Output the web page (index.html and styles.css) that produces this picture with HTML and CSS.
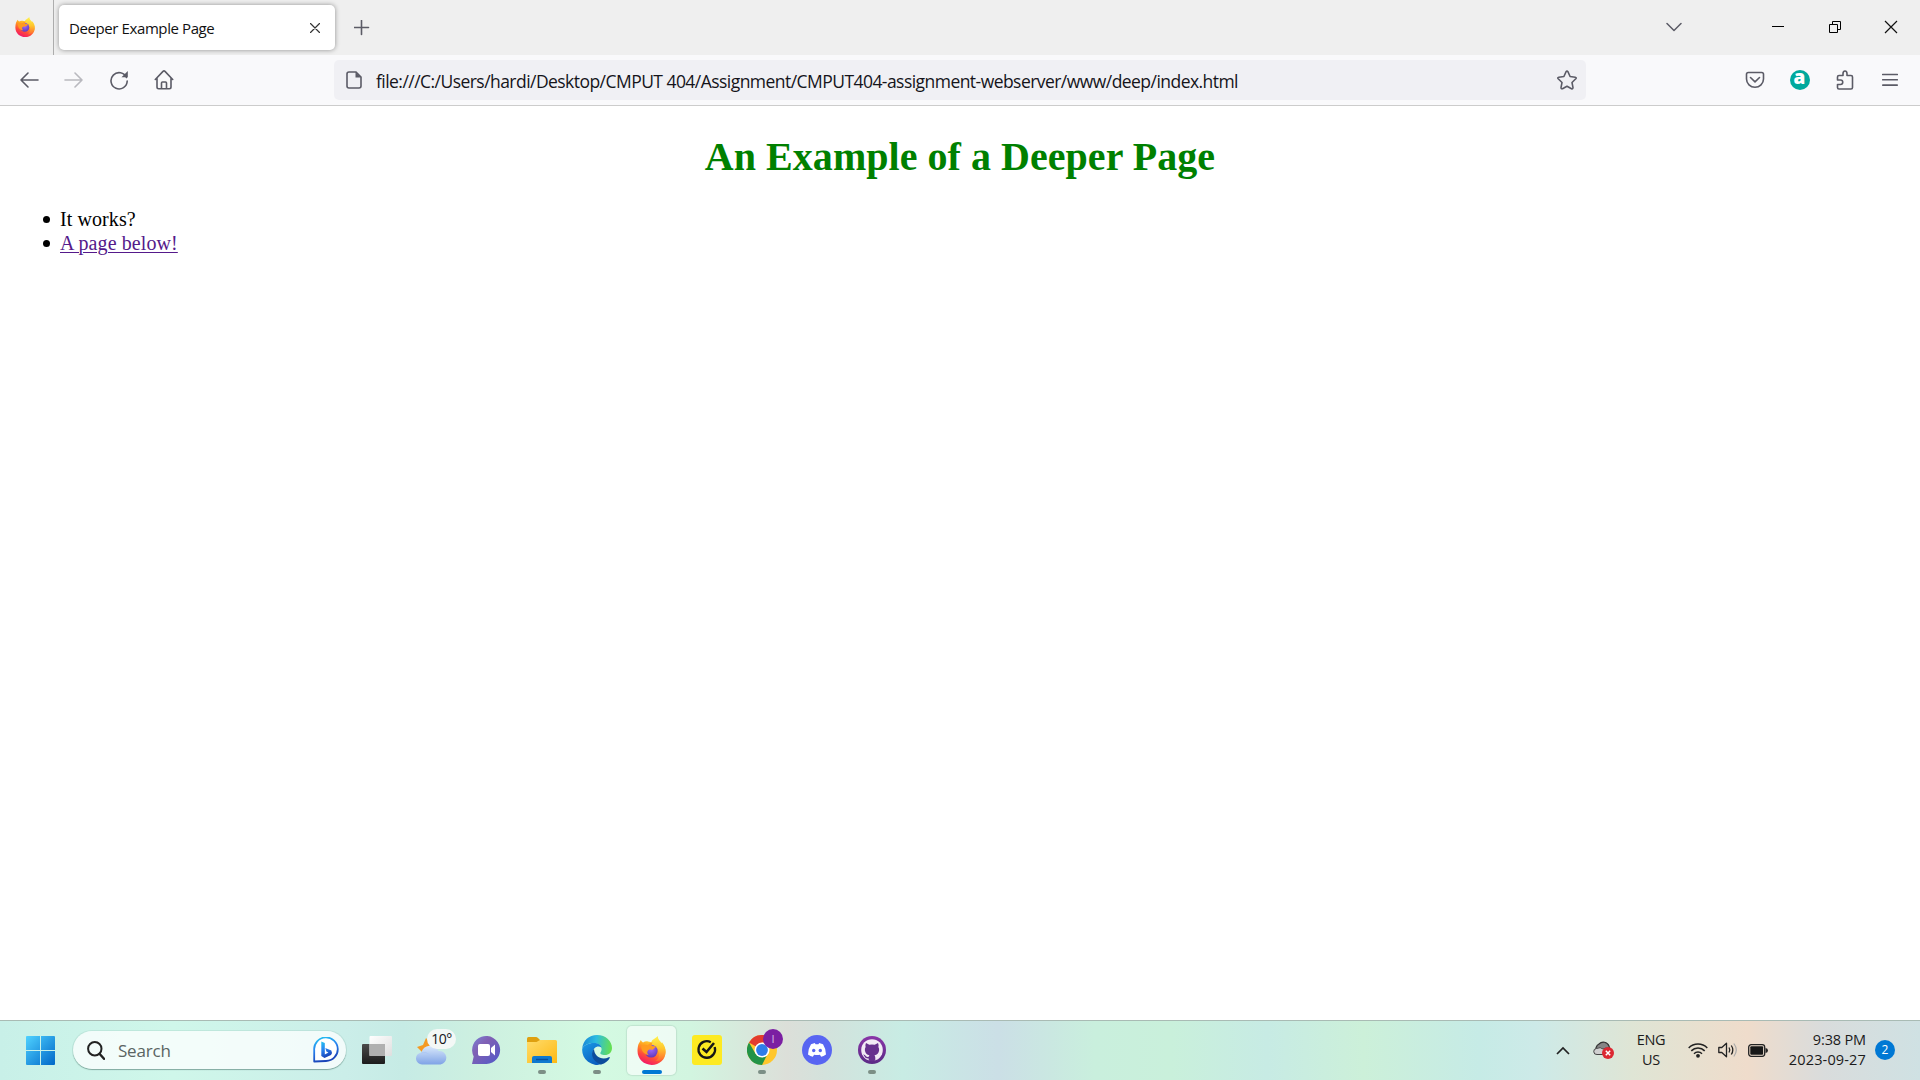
FILE: index.html
```html
<!DOCTYPE html>
<html lang="en">
<head>
<meta charset="utf-8">
<title>Deeper Example Page</title>
<link rel="stylesheet" href="styles.css">
</head>
<body>
<svg class="defs" width="0" height="0" aria-hidden="true">
  <defs>
    <linearGradient id="ff-body" x1=".8" y1="0" x2=".3" y2="1"><stop offset="0" stop-color="#fff13f"/><stop offset=".4" stop-color="#ffa020"/><stop offset=".7" stop-color="#ff4a3c"/><stop offset="1" stop-color="#f1126c"/></linearGradient>
    <linearGradient id="ff-tail" x1=".5" y1="0" x2=".5" y2="1"><stop offset="0" stop-color="#fff44f"/><stop offset=".5" stop-color="#ffc62c"/><stop offset="1" stop-color="#ff6a30"/></linearGradient>
    <radialGradient id="ff-core" cx=".5" cy=".35" r=".7"><stop offset="0" stop-color="#a06bff"/><stop offset="1" stop-color="#5b35b5"/></radialGradient>
    <linearGradient id="win" x1="0" y1="0" x2="1" y2="1"><stop offset="0" stop-color="#4fd2ff"/><stop offset="1" stop-color="#0067c8"/></linearGradient>
    <linearGradient id="bing" x1="0" y1="0" x2=".3" y2="1"><stop offset="0" stop-color="#23c6f0"/><stop offset=".5" stop-color="#2883f0"/><stop offset="1" stop-color="#1a44b8"/></linearGradient>
    <linearGradient id="dark" x1="0" y1="0" x2="0" y2="1"><stop offset="0" stop-color="#4a4a4a"/><stop offset="1" stop-color="#1c1c1c"/></linearGradient>
    <linearGradient id="light" x1="0" y1="0" x2="1" y2="1"><stop offset="0" stop-color="#fff"/><stop offset="1" stop-color="#dedede"/></linearGradient>
    <linearGradient id="cloud" x1="0" y1="0" x2="0" y2="1"><stop offset="0" stop-color="#dcebfc"/><stop offset="1" stop-color="#7fa3e6"/></linearGradient>
    <linearGradient id="chat" x1="0" y1="0" x2="1" y2="1"><stop offset="0" stop-color="#7a83d8"/><stop offset=".35" stop-color="#8060b4"/><stop offset="1" stop-color="#5059c9"/></linearGradient>
    <linearGradient id="folder" x1="0" y1="0" x2="1" y2="1"><stop offset="0" stop-color="#ffdc6c"/><stop offset="1" stop-color="#fdb913"/></linearGradient>
    <linearGradient id="edge-top" x1="0" y1=".4" x2="1" y2=".5"><stop offset="0" stop-color="#1787d8"/><stop offset=".45" stop-color="#2dbce0"/><stop offset="1" stop-color="#66e04e"/></linearGradient>
    <linearGradient id="edge-left" x1="0" y1="0" x2=".6" y2="1"><stop offset="0" stop-color="#1a9ae6"/><stop offset="1" stop-color="#0a5fbf"/></linearGradient>
    <linearGradient id="git" x1="0" y1="0" x2="0" y2="1"><stop offset="0" stop-color="#8a35a8"/><stop offset="1" stop-color="#5b2a86"/></linearGradient>
    <symbol id="firefox" viewBox="0 0 28 28">
      <path fill="url(#ff-body)" d="M1.400 8C2 6.300 3 5.600 3.600 3.800c.6 1.200 1.300 2 2.200 2.400C7.300 5.300 8.900 5 10.500 5.200L14 6l4-1c4.500 1 9.600 4 9.600 10.300C27.600 23 21.600 28 14.200 28S.5 22.500.5 14.600C.5 12 .8 10 1.400 8z"/>
      <path fill="url(#ff-tail)" d="M20 0c.2 3.300 2 4.800 4 6.900.1-.5.100-.8 0-1.200 2.600 3 3.900 6.200 3.500 10.200C27 22 22 24.600 18 24c4.300-2.600 4.400-9 1-12-2.600-2.200-5-3.400-5-6C14 3.500 17.700 2.600 20 0z"/>
      <circle cx="13.700" cy="14.600" r="6.200" fill="url(#ff-core)"/>
      <path fill="#ff9a1f" d="M4 10c2.400-2.500 5-1.500 6.400-1 1.500-2 3-2.700 4.600-2.800-.8 1.100-1.100 2.200-.8 3.100 1 .5 3 .4 4 .8-.3 1.700-2.200 2-3.200 3.300-2-.5-3.800-.4-4.700 1.100-.8 1.400-.2 3 1.200 4-4.500-.3-7.500-4-7.500-8.500z"/>
    </symbol>
  </defs>
</svg>

<header class="titlebar">
  <div class="titlebar-brand"><svg width="20" height="20"><use href="#firefox"/></svg></div>
  <div class="tab">
    <span class="tab-title">Deeper Example Page</span>
    <svg class="stroke" width="10" height="10" viewBox="0 0 10 10"><path d="M.5.500l9 9M9.500.5l-9 9" stroke="#333" stroke-width="1.200"/></svg>
  </div>
  <svg class="stroke new-tab" width="16" height="16" viewBox="0 0 16 16"><path d="M7.500.5v14M.5 7.500h14"/></svg>
  <div class="window-controls">
    <svg class="stroke" width="16" height="10" viewBox="0 0 16 10"><path d="M1 1.500l7 7 7-7" stroke-width="1.500"/></svg>
    <svg class="minimize" width="12" height="12" viewBox="0 0 12 12"><path d="M0 5.500h12" stroke="#000"/></svg>
    <svg width="12" height="12" viewBox="0 0 12 12"><path d="M.5 3.500h8v8h-8zM3.500 3.500v-3h8v8h-3" fill="none" stroke="#000"/></svg>
    <svg width="14" height="14" viewBox="0 0 14 14"><path d="M1 1l12 12M13 1L1 13" stroke="#111" stroke-width="1.200"/></svg>
  </div>
</header>

<nav class="toolbar">
  <div class="tool"><svg class="stroke" width="20" height="20" viewBox="0 0 20 20"><path d="M19 10H2M9 3L2 10l7 7"/></svg></div>
  <div class="tool disabled"><svg class="stroke" width="20" height="20" viewBox="0 0 20 20"><path d="M1 10h17M11 3l7 7-7 7"/></svg></div>
  <div class="tool"><svg class="stroke" width="20" height="20" viewBox="0 0 20 20"><path d="M17.500 7.500A8.100 8.100 0 1 0 18.200 11"/><path d="M18.800 1v6.300h-6.300z" fill="#5b5b66" stroke="none"/></svg></div>
  <div class="tool"><svg class="stroke" width="20" height="20" viewBox="0 0 20 20"><path d="M1.300 9.500L9 1.400q1-.9 2 0l7.700 8.100M3 8v9q0 1.700 1.700 1.700h10.600q1.700 0 1.700-1.700V8M7.500 18.500V13q0-1 1-1h3q1 0 1 1v5.500"/></svg></div>
  <div class="address">
    <svg width="16" height="18" viewBox="0 0 16 18"><path d="M3 1h7l5 5v9q0 2-2 2H3q-2 0-2-2V3q0-2 2-2z" fill="none" stroke="#5b5b66" stroke-width="1.600"/><path d="M9.500 1v5.500H15z" fill="#5b5b66"/></svg>
    <span class="address-text">file:///C:/Users/hardi/Desktop/CMPUT 404/Assignment/CMPUT404-assignment-webserver/www/deep/index.html</span>
    <svg class="stroke" width="20" height="20" viewBox="0 0 20 20"><path d="M9.100 1.700q.9-1.500 1.800 0l2.200 4.800 5.100.7q1.600.4.600 1.600L15 12.500l1 5.100q0 1.700-1.500 1.100L10 16.200l-4.500 2.500Q4 19.200 4 17.600l1-5.100L1.200 8.800q-1-1.200.6-1.600l5.100-.7z"/></svg>
  </div>
  <div class="extensions">
    <div class="tool"><svg class="stroke" width="20" height="20" viewBox="0 0 20 20"><path d="M3.300 2.500h13.400q1.800 0 1.800 1.800V9a8.500 8.300 0 0 1-17 0V4.300q0-1.800 1.800-1.800zM5.500 7.500L10 11.800l4.500-4.300"/></svg></div>
    <div class="tool"><span class="ext-badge">a</span></div>
    <div class="tool"><svg class="stroke" width="20" height="20" viewBox="0 0 20 20"><path d="M2.500 10V7q0-1.500 1.500-1.500h4V3.700a2 2.700 0 0 1 4 0v1.800h4q1.500 0 1.500 1.500v10.500q0 1.500-1.500 1.500H4q-1.500 0-1.500-1.500v-3h3a2.200 2.200 0 0 0 0-4.500z"/></svg></div>
    <div class="tool"><svg class="stroke" width="16" height="14" viewBox="0 0 16 14"><path d="M.7 1.500h14.600M.7 6.800h14.600M.7 12.100h14.600"/></svg></div>
  </div>
</nav>

<main class="page">
  <h1>An Example of a Deeper Page</h1>
  <ul>
    <li>It works?</li>
    <li><a class="below" href="#">A page below!</a></li>
  </ul>
</main>

<footer class="taskbar">
  <svg class="start" width="29" height="29" viewBox="0 0 29 29"><path fill="url(#win)" d="M1 0h13v14H0V1q0-1 1-1zM15 0h13q1 0 1 1v13H15zM0 15h14v14H1q-1 0-1-1zM15 15h14v13q0 1-1 1H15z"/></svg>
  <div class="search">
    <svg width="18" height="19" viewBox="0 0 18 19"><circle cx="7.800" cy="7.800" r="6.700" fill="none" stroke="#222" stroke-width="2"/><path d="M12.500 12.800l4.500 5" stroke="#222" stroke-width="2.400" stroke-linecap="round"/></svg>
    <span class="search-label">Search</span>
    <svg width="26" height="26" viewBox="0 0 26 26"><path d="M1.200 24.500V13A11.800 11.800 0 1 1 13 24z" fill="#fff" stroke="url(#bing)" stroke-width="1.800" stroke-linejoin="round"/><path d="M8.300 4.500l3.500 1.400v11.500l3.600-2-2-1-1.100-3.400 6 2.500q1.500 2.500-.3 4.400L11.500 21l-3.200-2z" fill="url(#bing)"/></svg>
  </div>
  <div class="apps">
    <div class="app"><svg width="30" height="28" viewBox="0 0 30 28"><rect y="8" width="23" height="20" rx="1" fill="url(#dark)"/><rect x="7.500" width="22.500" height="20" rx="1" fill="url(#light)"/><path d="M7.500 8H23v12H7.500z" fill="#b0b0b0"/></svg></div>
    <div class="app"><svg width="31" height="30" viewBox="0 0 31 30"><path d="M1 12l6-2 3-7 5 5 5 2-2 5-10 4-3-3z" fill="#f59a23"/><path d="M6.500 29.500a6 6 0 0 1-1-12 9 9 0 0 1 17-1.500 6.800 6.800 0 0 1 2 13.500z" fill="url(#cloud)"/><path d="M5 18q5-2 9 2" fill="none" stroke="#adc8f5"/></svg><span class="degrees">10°</span></div>
    <div class="app"><svg width="29" height="28" viewBox="0 0 29 28"><path d="M0 28l1.700-7.500A14 14 0 1 1 14.500 28z" fill="url(#chat)"/><rect x="6" y="8" width="12" height="12" rx="2" fill="#fff"/><path d="M19 12l4-3.500v11L19 16z" fill="#fff"/></svg></div>
    <div class="app running"><svg width="30" height="27" viewBox="0 0 30 27"><path d="M0 1.500Q0 0 1.500 0H9q1 0 2 1l2 2v6H0z" fill="#dfa010"/><path d="M0 5h9.500L13 3h15.500Q30 3 30 4.500V26H0z" fill="url(#folder)"/><path d="M5 26v-5q0-2 2-2h16q2 0 2 2v5z" fill="#0f79cf"/><path d="M9 22.500h12" stroke="#064f9e" stroke-width="1.400"/></svg></div>
    <div class="app running"><svg width="30" height="30" viewBox="0 0 30 30"><path d="M.2 14C.8 5.500 7 0 15 0c9 0 15 6.300 15 13 0 4.500-3.300 7-7 7-3.600 0-5.300-1.200-4.500-2.500 3-4-.3-9.500-6.500-9.500C6 8 1.500 10.500.2 14z" fill="url(#edge-top)"/><path d="M.2 14C1.500 10.500 6 8 12 8c4 0 6.800 2 7.600 4.700-2-1.700-5.200-1.400-7.300.8-3.600 3.800-.3 12 7.700 15.600A15 15 0 0 1 .2 14z" fill="url(#edge-left)"/><path d="M12 13.800c-4.500 5.700-.5 13.600 7 15.600 4.300-.9 7.500-3.700 8.700-6.400.3-.8-.2-1.100-.9-.7-6.500 3.300-14.500 0-14.800-8.500z" fill="#0c4c9c"/></svg></div>
    <div class="app active"><svg width="29" height="29"><use href="#firefox"/></svg></div>
    <div class="app"><svg width="30" height="30" viewBox="0 0 30 30"><rect width="30" height="30" rx="3" fill="#fdea22"/><path d="M18.800 7.200A8.300 8.300 0 1 0 22.700 12" fill="none" stroke="#171717" stroke-width="2.300"/><path d="M10.500 13.500l4 3.500L22 8" fill="none" stroke="#171717" stroke-width="2.600"/></svg></div>
    <div class="app running"><svg width="30" height="30" viewBox="0 0 30 30"><circle cx="15" cy="15" r="15" fill="#ffc72c"/><path d="M15 15L2 7.500A15 15 0 0 1 28 7.500H15z" fill="#e33b2e"/><path d="M15 30A15 15 0 0 1 2 7.500l6.500 11.300L15 22l4.500-1z" fill="#229347"/><circle cx="15" cy="15" r="7.500" fill="#fff"/><circle cx="15" cy="15" r="5.900" fill="#2f7de9"/></svg><span class="profile-badge">I</span></div>
    <div class="app"><svg width="30" height="30" viewBox="0 0 30 30"><circle cx="15" cy="15" r="15" fill="#5865f2"/><path d="M9 9.200L12.800 8l.8 1.300h2.800l.8-1.300L21 9.200q3.200 5 3 10.300-2.500 1.700-4.800 2.200l-1.300-2q-2.900.7-5.800 0l-1.300 2Q8.500 21.200 6 19.500 5.800 14.200 9 9.200z" fill="#fff"/><circle cx="11.700" cy="15.500" r="1.700" fill="#5865f2"/><circle cx="18.300" cy="15.500" r="1.700" fill="#5865f2"/></svg></div>
    <div class="app running"><svg width="28" height="28" viewBox="0 0 28 28"><circle cx="14" cy="14" r="14" fill="url(#git)"/><circle cx="14" cy="14" r="10.800" fill="#f2eaf5"/><path d="M8 7l3.300 1.800q2.700-.7 5.400 0L20 7q1 2 .4 4 1 1.500.7 3.500-.6 4-4.600 4.800.8 1 .8 2.500v3q-3.300.9-6.600 0v-2.300q-3.200.4-4.300-2.300-.5-1-1.300-1.600 1.800-.2 2.700 1.500 1 1.300 2.900.7.1-.9.800-1.500-4-.8-4.600-4.800-.3-2 .7-3.500Q7 9 8 7z" fill="#67308e"/></svg></div>
  </div>
  <div class="tray">
    <svg class="chevron" width="14" height="9" viewBox="0 0 14 9"><path d="M1 8l6-6 6 6" fill="none" stroke="#222" stroke-width="1.700"/></svg>
    <svg class="onedrive" width="21" height="18" viewBox="0 0 21 18"><path d="M3.500 11A6 6 0 0 1 6 3a6 6 0 0 1 10 2l2 7.500z" fill="#858585" stroke="#333" stroke-width="1.200"/><path d="M4 13.500a3 3 0 0 1-.5-6q4-2 6.500.5 3-2 7 0v5.500z" fill="#d0d0d0" stroke="#444"/><circle cx="15" cy="12" r="6" fill="#dc2832"/><path d="M12.800 9.800l4.400 4.400M17.200 9.800l-4.400 4.400" stroke="#fff" stroke-width="1.500"/></svg>
    <div class="language"><span>ENG</span><span>US</span></div>
    <svg class="wifi" width="20" height="16" viewBox="0 0 20 16"><g fill="none" stroke="#222" stroke-width="1.500"><path d="M.7 6a13 13 0 0 1 18.600 0M3.300 8.900a9.400 9.400 0 0 1 13.400 0M6 11.700a5.700 5.700 0 0 1 8 0"/></g><circle cx="10" cy="13.800" r="1.900" fill="#222"/></svg>
    <svg class="volume" width="20" height="16" viewBox="0 0 20 16"><path d="M.8 5.500h3L8.500 1.200v13.600L3.800 10.500h-3zM11 5.500q1.600 2.500 0 5M13.300 3.500q3 4.500 0 9" fill="none" stroke="#222" stroke-width="1.300" stroke-linejoin="round"/><path d="M15.800 1.500q5 6.500 0 13" fill="none" stroke="#aaa" stroke-width="1.200"/></svg>
    <svg class="battery" width="20" height="13" viewBox="0 0 20 13"><rect x=".7" y=".7" width="16" height="11.600" rx="2.500" fill="none" stroke="#222" stroke-width="1.300"/><rect x="2.300" y="2.300" width="12.800" height="8.400" rx="1" fill="#171717"/><path d="M17.500 4q2.500.2 2.500 2.500T17.500 9z" fill="#222"/></svg>
    <div class="clock"><span>9:38 PM</span><span class="date">2023-09-27</span></div>
    <span class="count">2</span>
  </div>
</footer>
</body>
</html>
```
FILE: styles.css
```css
* { box-sizing: border-box; }
html, body { height: 100%; }
body {
  margin: 0;
  display: flex;
  flex-direction: column;
  overflow: hidden;
  background: #fff;
  font-family: "Open Sans", "Noto Sans", sans-serif;
  color: #15141a;
}
svg { display: block; flex: none; }
.defs { position: absolute; }
.stroke {
  fill: none;
  stroke: #5b5b66;
  stroke-width: 1.6;
  stroke-linecap: round;
  stroke-linejoin: round;
}

/* Title bar */
.titlebar {
  flex: none;
  height: 55px;
  display: flex;
  background: #efefef;
}
.titlebar-brand {
  width: 54px;
  padding: 17px 0 0 15px;
  border-right: 1px solid #adadad;
}
.tab {
  width: 276px;
  height: 45px;
  margin: 5px 0 0 5px;
  padding: 0 15px 0 10px;
  display: flex;
  align-items: center;
  justify-content: space-between;
  background: #fff;
  border-radius: 5px;
  box-shadow: 0 0 5px rgba(0, 0, 0, .4);
}
.tab-title { font-size: 15px; letter-spacing: -.4px; white-space: nowrap; color: #111; }
.new-tab { margin: 20px 0 0 19px; }
.window-controls {
  flex: 1;
  display: flex;
  align-items: center;
  justify-content: flex-end;
  padding-right: 22px;
}
.window-controls svg { margin-bottom: 1px; }
.window-controls .minimize { margin-left: 90px; margin-right: 45px; }
.window-controls svg:last-child { margin-left: 43px; }

/* Navigation toolbar */
.toolbar {
  flex: none;
  height: 51px;
  padding: 0 8px 0 7px;
  display: flex;
  align-items: center;
  background: #f9f9fb;
  border-bottom: 1px solid #ccc;
}
.tool { width: 45px; display: flex; justify-content: center; }
.toolbar > .tool { padding-right: 1px; }
.disabled { opacity: .4; }
.address {
  width: 1252px;
  height: 40px;
  margin-left: 147px;
  padding: 0 9px 0 12px;
  display: flex;
  align-items: center;
  background: #f0f0f4;
  border-radius: 5px;
}
.address-text { flex: 1; margin: 2px 0 0 14px; font-size: 17.5px; white-space: nowrap; letter-spacing: -.545px; }
.extensions { display: flex; align-items: center; margin-left: auto; }
.ext-badge {
  width: 20px;
  height: 20px;
  border-radius: 50%;
  background: #00a99d;
  color: #fff;
  font-size: 19px;
  font-weight: 800;
  line-height: 15px;
  text-align: center;
}

/* Document */
.page {
  flex: 1;
  padding: 0 10px;
  overflow: hidden;
  font: 20px/24px "Liberation Serif", serif;
  letter-spacing: .09px;
  color: #000;
}
h1 { margin: 27px 0; font-size: 40px; line-height: 47px; letter-spacing: .04px; text-align: center; color: green; }
ul { margin: 0; padding-left: 50px; list-style: none; }
li { display: flex; align-items: center; }
li::before {
  content: "";
  width: 7px;
  height: 7px;
  margin: 1px 10px 0 -17px;
  border-radius: 50%;
  background: #000;
}
.below { color: #551a8b; text-decoration-thickness: 1px; text-underline-offset: 2px; }

/* Taskbar */
.taskbar {
  flex: none;
  height: 60px;
  padding: 0 0 1px 26px;
  display: flex;
  align-items: center;
  border-top: 1px solid #a9bbb4;
  background: linear-gradient(90deg, #c8f0e8 0, #cff7ea 9%, #cbeee9 18%, #c6ebe5 21%, #cdf0e0 25%, #d4fae2 31%, #d2f5e0 36%, #dcdfd9 41%, #d3e2dc 43%, #c8ece4 47%, #cbdfe6 52%, #c9efdd 57%, #c9f0db 61%, #c7ebe4 66%, #ccf0d9 71%, #c6ebe6 77%, #cdeae8 80%, #dfe5d5 85%, #efdccb 91%, #d9dcdc 95%, #cfe1e3 100%);
}
.search {
  width: 273px;
  height: 38px;
  margin-left: 18px;
  padding: 0 7px 0 14px;
  display: flex;
  align-items: center;
  border-radius: 19px;
  background: rgba(255, 255, 255, .75);
  box-shadow: 0 1px 1px rgba(70, 110, 100, .5), 0 0 0 1px rgba(120, 170, 160, .18);
}
.search-label { flex: 1; margin-left: 13px; font-size: 17px; letter-spacing: -.2px; color: #5a6462; }
.apps { display: flex; margin-left: 3px; }
.app {
  position: relative;
  width: 49px;
  height: 49px;
  margin: 0 3px;
  display: flex;
  align-items: center;
  justify-content: center;
}
.running::after, .active::after {
  content: "";
  position: absolute;
  bottom: 1px;
  left: 20.5px;
  width: 8px;
  height: 4px;
  border-radius: 2px;
  background: #7c8f86;
}
.active {
  border-radius: 5px;
  background: rgba(255, 255, 255, .6);
  box-shadow: 0 0 1px 1px rgba(120, 150, 140, .2);
}
.active::after { left: 14.5px; width: 20px; background: #0078d4; }
.degrees {
  position: absolute;
  left: 20px;
  top: 3px;
  width: 29px;
  height: 20px;
  border-radius: 10px;
  background: #f3f8f6;
  font-size: 14px;
  line-height: 20px;
  text-align: center;
  letter-spacing: -.5px;
}
.profile-badge {
  position: absolute;
  left: 26px;
  top: 3px;
  width: 20px;
  height: 20px;
  border-radius: 50%;
  background: #7b1fa2;
  color: #d9bde5;
  font-size: 11px;
  line-height: 20px;
  text-align: center;
}
.tray {
  display: flex;
  align-items: center;
  margin-left: auto;
  padding-right: 25px;
  color: #1b1b1b;
  font-size: 14.5px;
}
.onedrive { margin-left: 23px; }
.language {
  width: 36px;
  margin-left: 19px;
  display: flex;
  flex-direction: column;
  align-items: center;
  line-height: 20px;
  letter-spacing: -.3px;
}
.wifi { margin-left: 19px; }
.volume { margin-left: 10px; }
.battery { margin-left: 10px; }
.clock {
  width: 88px;
  margin-left: 10px;
  display: flex;
  flex-direction: column;
  align-items: flex-end;
  line-height: 20px;
  white-space: nowrap;
  letter-spacing: -.15px;
}
.date { letter-spacing: .15px; }
.count {
  width: 20px;
  height: 20px;
  margin-left: 9px;
  border-radius: 50%;
  background: #0078d4;
  color: #fff;
  font-size: 12px;
  line-height: 20px;
  text-align: center;
}
```
